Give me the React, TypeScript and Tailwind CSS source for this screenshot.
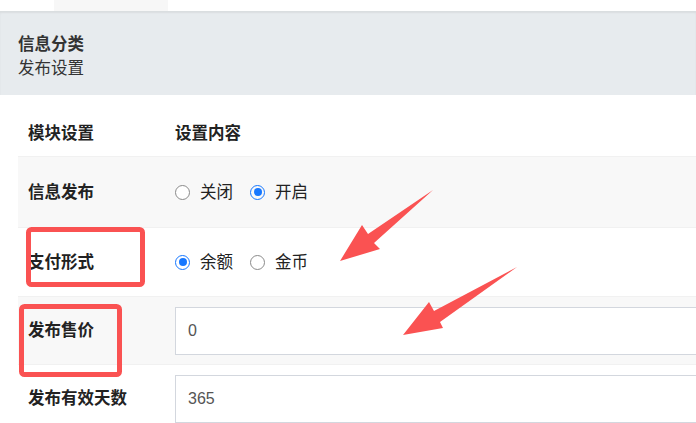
import React from 'react'

const font = { fontFamily: '"Liberation Sans", "Noto Sans CJK SC", sans-serif' }

function Radio({ checked, label }: { checked: boolean; label: string }) {
  return (
    <label className="flex items-center gap-[10px] mr-[17px]">
      {checked ? (
        <span className="w-[15px] h-[15px] rounded-full border-[1.5px] border-[#1677ff] flex items-center justify-center">
          <span className="w-[8px] h-[8px] rounded-full bg-[#1677ff]" />
        </span>
      ) : (
        <span className="w-[15px] h-[15px] rounded-full border-[1.5px] border-[#8a8a8a] bg-white" />
      )}
      <span className="text-[16.5px] text-[#222]">{label}</span>
    </label>
  )
}

function Row({ label, gray, h, children }: { label: string; gray?: boolean; h: string; children: React.ReactNode }) {
  return (
    <div className={`flex items-center ${h} ${gray ? 'bg-[#f8f8f8]' : 'bg-white'} border-t border-[#f1f1f1]`}>
      <div className="w-[157px] pl-[10px] font-bold text-[16.5px] text-[#222] shrink-0">{label}</div>
      <div className="flex-1 flex items-center">{children}</div>
    </div>
  )
}

export default function App() {
  return (
    <div className="relative w-[696px] h-[423px] overflow-hidden bg-white" style={font}>
      <div className="h-[11px] bg-white flex">
        <div className="ml-[54px] w-[114px] h-full bg-[#f7f7f7]" />
      </div>
      <div className="h-[84px] bg-[#e7ebee] shadow-[inset_0_2px_2px_rgba(0,0,0,0.06)] px-[18px] pt-[21px]">
        <div className="font-bold text-[16.5px] leading-[24px] text-[#333]">信息分类</div>
        <div className="text-[16.5px] leading-[24px] text-[#333]">发布设置</div>
      </div>

      <div className="ml-[18px] w-[760px] mt-[15px]">
        <div className="flex items-center h-[46px]">
          <div className="w-[157px] pl-[10px] font-bold text-[16.5px] text-[#222]">模块设置</div>
          <div className="font-bold text-[16.5px] text-[#222]">设置内容</div>
        </div>
        <Row label="信息发布" gray h="h-[71px]">
          <Radio checked={false} label="关闭" />
          <Radio checked label="开启" />
        </Row>
        <Row label="支付形式" h="h-[69px]">
          <Radio checked label="余额" />
          <Radio checked={false} label="金币" />
        </Row>
        <Row label="发布售价" gray h="h-[68px]">
          <div className="h-[48px] w-full bg-white border border-[#d3d7de] flex items-center pl-[12px] text-[16px] text-[#555]">0</div>
        </Row>
        <Row label="发布有效天数" h="h-[68px]">
          <div className="h-[48px] w-full bg-white border border-[#d3d7de] flex items-center pl-[12px] text-[16px] text-[#555]">365</div>
        </Row>
      </div>

      <svg className="absolute inset-0 pointer-events-none" width="696" height="423" viewBox="0 0 696 423">
        <rect x="28.5" y="229.5" width="114" height="55" rx="3" fill="none" stroke="#fa5252" strokeWidth="5" />
        <rect x="21.5" y="306.5" width="98" height="68" rx="3" fill="none" stroke="#fa5252" strokeWidth="5" />
        <polygon points="340,261 362,225 368,234 433,190 374,243 380,249" fill="#fa5252" />
        <polygon points="403,335 429,302 434,311 517,267 440,322 443,328" fill="#fa5252" />
      </svg>
    </div>
  )
}
